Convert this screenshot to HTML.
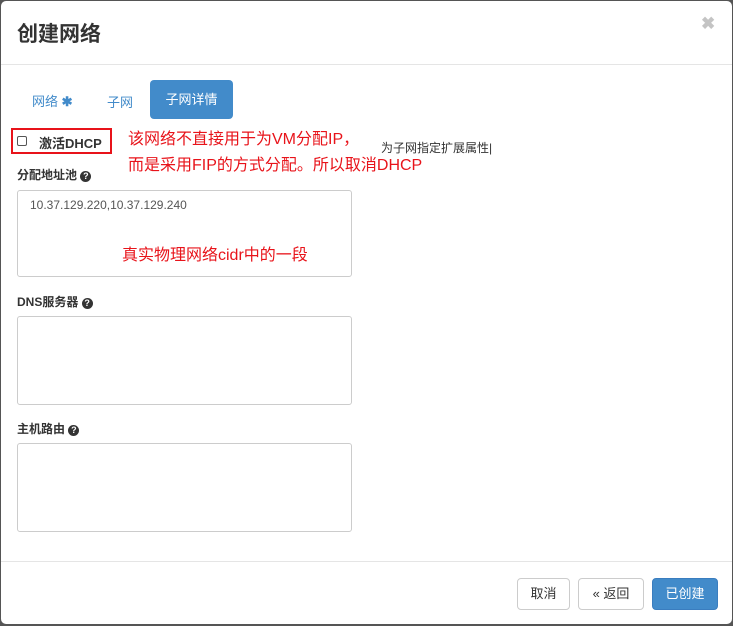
<!DOCTYPE html>
<html><head><meta charset="utf-8"><style>
*{box-sizing:border-box;margin:0;padding:0}
body{width:733px;height:626px;background:#555;font-family:"Liberation Sans","Noto Sans CJK SC",sans-serif;position:relative;overflow:hidden}
.m{position:absolute;left:1px;top:1px;width:731px;height:623px;background:#fff;border-radius:5px}
.a{position:absolute;white-space:nowrap}
.ta{position:absolute;left:16px;width:335px;border:1px solid #ccc;border-radius:3px;background:#fff}
.lbl{font-size:12px;font-weight:bold;color:#333}
.q{display:inline-block;width:11px;height:11px;border-radius:50%;background:#333;color:#fff;font-size:9px;text-align:center;line-height:11px;vertical-align:0}
.btn{position:absolute;top:577px;height:32px;border:1px solid #ccc;border-radius:4px;font-size:13px;color:#333;text-align:center;line-height:30px;background:#fff}
.red{color:#e8131a;font-size:16px}
</style></head><body>
<div class="m">
<div class="a" style="left:16px;top:17px;font-size:21px;color:#333;font-weight:bold">创建网络</div>
<div class="a" style="left:700px;top:13px;font-size:17px;color:#c4c4c4;font-weight:bold">✖</div>
<div class="a" style="left:0;top:63px;width:731px;height:1px;background:#e5e5e5"></div>
<div class="a" style="left:31px;top:90px;font-size:13px;color:#428bca">网络 <b>✱</b></div>
<div class="a" style="left:106px;top:91px;font-size:13px;color:#428bca">子网</div>
<div class="a" style="left:149px;top:79px;width:83px;height:39px;background:#428bca;border-radius:4px;color:#fff;font-size:13px;text-align:center;line-height:39px">子网详情</div>
<div class="a" style="left:10px;top:127px;width:101px;height:26px;border:2px solid #e8131a"></div>
<div class="a" style="left:16px;top:135px;width:10px;height:10px;border:1px solid #555;border-radius:2px"></div>
<div class="a" style="left:38px;top:132px;font-size:13px;font-weight:bold;color:#333">激活DHCP</div>
<div class="a red" style="left:127px;top:124px">该网络不直接用于为VM分配IP，</div>
<div class="a red" style="left:127px;top:150px">而是采用FIP的方式分配。所以取消DHCP</div>
<div class="a" style="left:380px;top:138px;font-size:12px;color:#333">为子网指定扩展属性|</div>
<div class="a lbl" style="left:16px;top:165px">分配地址池 <span class="q">?</span></div>
<div class="ta" style="top:189px;height:87px"></div>
<div class="a" style="left:29px;top:197px;font-size:12px;color:#555">10.37.129.220,10.37.129.240</div>
<div class="a red" style="left:121px;top:240px">真实物理网络cidr中的一段</div>
<div class="a lbl" style="left:16px;top:292px">DNS服务器 <span class="q">?</span></div>
<div class="ta" style="top:315px;height:89px"></div>
<div class="a lbl" style="left:16px;top:419px">主机路由 <span class="q">?</span></div>
<div class="ta" style="top:442px;height:89px"></div>
<div class="a" style="left:0;top:560px;width:731px;height:1px;background:#e5e5e5"></div>
<div class="btn" style="left:516px;width:53px">取消</div>
<div class="btn" style="left:577px;width:66px">« 返回</div>
<div class="btn" style="left:651px;width:66px;background:#428bca;border-color:#3a7dbf;color:#fff">已创建</div>
</div>
</body></html>
